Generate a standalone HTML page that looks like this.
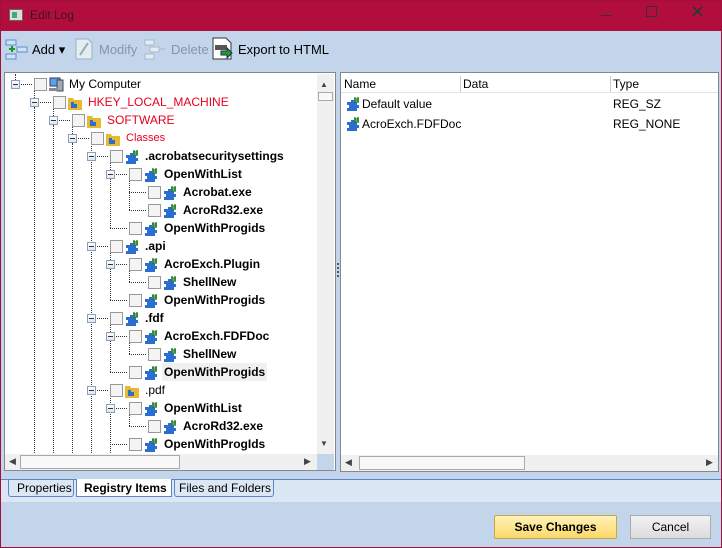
<!DOCTYPE html>
<html><head><meta charset="utf-8"><style>
*{box-sizing:border-box;margin:0;padding:0}
body{width:722px;height:548px;overflow:hidden;background:#c2d5eb;font-family:"Liberation Sans",sans-serif;font-size:12px;position:relative}
.a{position:absolute}
.title{left:0;top:0;width:722px;height:31px;background:#b10e3e}
.tb{font-size:13px;color:#000}
.panel{background:#fff;border:1px solid #828790}
.row{position:absolute;height:18px;line-height:18px;white-space:nowrap}
.exp{position:absolute;width:9px;height:9px;border:1px solid #8aa0b8;background:linear-gradient(#fff,#dfe6ee);top:5px}
.exp:after{content:"";position:absolute;left:1px;top:3px;width:5px;height:1px;background:#333}
.cb{position:absolute;width:13px;height:13px;border:1px solid #999;background:#f4f4f4;top:3px}
.ic{position:absolute;top:2px;width:16px;height:15px}
.t{position:absolute;top:0;font-size:12px}
.b{font-weight:bold}
.red{color:#e8001c}
.v{position:absolute;width:0;border-left:1px dotted #333}
.h{position:absolute;height:0;border-top:1px dotted #333}
.btn{position:absolute;text-align:center;line-height:22px;font-size:12px}
</style></head><body>
<svg width="0" height="0" style="position:absolute">
<defs>
<symbol id="pz" viewBox="0 0 16 15"><path d="M2 6h4V4h3v2h3v3h2v3h-2v3H2v-3h2V9H2z" fill="#2a6fd0"/><path d="M10 1v6M13 1v6M9 3h5M9 5h5" stroke="#1a7a1a" stroke-width="1.3"/></symbol>
<symbol id="fd" viewBox="0 0 16 15"><path d="M1 3h5l1 2h8v10H1z" fill="#e8b830"/><path d="M4 7h3v2h3v4H4z" fill="#2a6fd0"/></symbol>
</defs></svg>

<div class="a title"></div>
<div class="a" style="left:0;top:0;width:722px;height:548px;border:1px solid #a01038;pointer-events:none;z-index:5"></div>
<div class="a" style="left:9px;top:9px;width:14px;height:12px;background:#ddd;border:1px solid #666"><div style="margin:2px;width:5px;height:6px;background:#4a7"></div></div>
<div class="a" style="left:30px;top:8px;font-size:12px;color:#3a1520">Edit Log</div>
<div class="a" style="left:601px;top:15px;width:11px;height:1px;background:#333"></div>
<div class="a" style="left:646px;top:6px;width:11px;height:11px;border:1px solid #333"></div>
<div class="a" style="left:690px;top:2px;font-size:18px;color:#333">✕</div>

<!-- toolbar -->
<svg class="a" style="left:5px;top:39px" width="24" height="22"><rect x="1" y="1" width="10" height="5" fill="#cfe3f8" stroke="#5b8ec8"/><rect x="1" y="15" width="10" height="5" fill="#cfe3f8" stroke="#5b8ec8"/><rect x="12" y="8" width="10" height="5" fill="#cfe3f8" stroke="#5b8ec8"/><path d="M4 10h6M7 7v6" stroke="#1a9a1a" stroke-width="2"/></svg>
<div class="a tb" style="left:32px;top:42px">Add ▾</div>
<svg class="a" style="left:74px;top:37px" width="20" height="24"><path d="M2 2h12l4 4v16H2z" fill="#e4ecf4" stroke="#9fb0c4"/><path d="M6 18l8-12" stroke="#9aa" stroke-width="2"/></svg>
<div class="a tb" style="left:99px;top:42px;color:#8a95a3">Modify</div>
<svg class="a" style="left:144px;top:39px" width="24" height="22"><rect x="1" y="1" width="9" height="5" fill="#e4ecf4" stroke="#a8b8cc"/><rect x="1" y="15" width="9" height="5" fill="#e4ecf4" stroke="#a8b8cc"/><rect x="6" y="8" width="9" height="5" fill="#e4ecf4" stroke="#a8b8cc"/><path d="M16 10h5" stroke="#a8b8cc"/></svg>
<div class="a tb" style="left:171px;top:42px;color:#8a95a3">Delete</div>
<svg class="a" style="left:212px;top:37px" width="22" height="24"><path d="M1 1h13l5 5v16H1z" fill="#fff" stroke="#333"/><rect x="3" y="8" width="12" height="5" fill="#555"/><path d="M9 14h6v-3l5 5-5 5v-3H9z" fill="#2a9a2a" stroke="#135"/></svg>
<div class="a tb" style="left:238px;top:42px">Export to HTML</div>

<!-- tree panel -->
<div class="a panel" style="left:4px;top:72px;width:332px;height:399px"></div>
<div class="a" style="left:317px;top:74px;width:17px;height:380px;background:#f0f0f0"></div>
<div class="a" style="left:320px;top:80px;font-size:8px;color:#444">▲</div>
<div class="a" style="left:318px;top:92px;width:15px;height:9px;border:1px solid #aaa;background:#f8f8f8"></div>
<div class="a" style="left:320px;top:439px;font-size:8px;color:#444">▼</div>
<div class="a" style="left:5px;top:454px;width:312px;height:16px;background:#f0f0f0"></div>
<div class="a" style="left:20px;top:455px;width:160px;height:14px;border:1px solid #aaa;background:#f8f8f8"></div>
<div class="a" style="left:9px;top:456px;font-size:9px;color:#444">◀</div>
<div class="a" style="left:304px;top:456px;font-size:9px;color:#444">▶</div>
<div class="a" style="left:317px;top:454px;width:17px;height:16px;background:#c2d5eb"></div>

<!-- dotted lines -->
<div class="v" style="left:15px;top:74px;height:6px"></div>
<div class="v" style="left:34px;top:89px;height:9px"></div>
<div class="v" style="left:53px;top:107px;height:9px"></div>
<div class="v" style="left:72px;top:125px;height:9px"></div>
<div class="v" style="left:91px;top:143px;height:310px"></div>
<div class="v" style="left:110px;top:161px;height:67px"></div>
<div class="v" style="left:110px;top:251px;height:49px"></div>
<div class="v" style="left:110px;top:323px;height:49px"></div>
<div class="v" style="left:110px;top:395px;height:58px"></div>
<div class="v" style="left:129px;top:179px;height:31px"></div>
<div class="v" style="left:129px;top:269px;height:13px"></div>
<div class="v" style="left:129px;top:341px;height:13px"></div>
<div class="v" style="left:129px;top:413px;height:13px"></div>
<div class="v" style="left:72px;top:143px;height:310px"></div>
<div class="v" style="left:53px;top:125px;height:328px"></div>
<div class="v" style="left:34px;top:107px;height:346px"></div>

<div class="row" style="top:75px;left:0;width:316px">
<div class="exp" style="left:11px"></div><div class="h" style="left:21px;top:9px;width:11px"></div>
<div class="cb" style="left:34px"></div>
<svg class="ic" style="left:48px" viewBox="0 0 16 15"><rect x="2" y="1" width="10" height="8" fill="#5ba3e8" stroke="#336"/><rect x="9" y="3" width="6" height="11" fill="#9ab" stroke="#445"/><rect x="1" y="11" width="9" height="3" fill="#889"/></svg>
<span class="t" style="left:69px">My Computer</span></div>

<div class="row" style="top:93px;left:0;width:316px">
<div class="exp" style="left:30px"></div><div class="h" style="left:40px;top:9px;width:11px"></div>
<div class="cb" style="left:53px"></div><svg class="ic" style="left:67px"><use href="#fd"/></svg>
<span class="t red" style="left:88px">HKEY_LOCAL_MACHINE</span></div>

<div class="row" style="top:111px;left:0;width:316px">
<div class="exp" style="left:49px"></div><div class="h" style="left:59px;top:9px;width:11px"></div>
<div class="cb" style="left:72px"></div><svg class="ic" style="left:86px"><use href="#fd"/></svg>
<span class="t red" style="left:107px">SOFTWARE</span></div>

<div class="row" style="top:129px;left:0;width:316px">
<div class="exp" style="left:68px"></div><div class="h" style="left:78px;top:9px;width:11px"></div>
<div class="cb" style="left:91px"></div><svg class="ic" style="left:105px"><use href="#fd"/></svg>
<span class="t red" style="left:126px;font-size:11px">Classes</span></div>

<div class="row" style="top:147px;left:0;width:316px">
<div class="exp" style="left:87px"></div><div class="h" style="left:97px;top:9px;width:11px"></div>
<div class="cb" style="left:110px"></div><svg class="ic" style="left:124px"><use href="#pz"/></svg>
<span class="t b" style="left:145px">.acrobatsecuritysettings</span></div>

<div class="row" style="top:165px;left:0;width:316px">
<div class="exp" style="left:106px"></div><div class="h" style="left:116px;top:9px;width:11px"></div>
<div class="cb" style="left:129px"></div><svg class="ic" style="left:143px"><use href="#pz"/></svg>
<span class="t b" style="left:164px">OpenWithList</span></div>

<div class="row" style="top:183px;left:0;width:316px">
<div class="h" style="left:129px;top:9px;width:17px"></div>
<div class="cb" style="left:148px"></div><svg class="ic" style="left:162px"><use href="#pz"/></svg>
<span class="t b" style="left:183px">Acrobat.exe</span></div>

<div class="row" style="top:201px;left:0;width:316px">
<div class="h" style="left:129px;top:9px;width:17px"></div>
<div class="cb" style="left:148px"></div><svg class="ic" style="left:162px"><use href="#pz"/></svg>
<span class="t b" style="left:183px">AcroRd32.exe</span></div>

<div class="row" style="top:219px;left:0;width:316px">
<div class="h" style="left:110px;top:9px;width:17px"></div>
<div class="cb" style="left:129px"></div><svg class="ic" style="left:143px"><use href="#pz"/></svg>
<span class="t b" style="left:164px">OpenWithProgids</span></div>

<div class="row" style="top:237px;left:0;width:316px">
<div class="exp" style="left:87px"></div><div class="h" style="left:97px;top:9px;width:11px"></div>
<div class="cb" style="left:110px"></div><svg class="ic" style="left:124px"><use href="#pz"/></svg>
<span class="t b" style="left:145px">.api</span></div>

<div class="row" style="top:255px;left:0;width:316px">
<div class="exp" style="left:106px"></div><div class="h" style="left:116px;top:9px;width:11px"></div>
<div class="cb" style="left:129px"></div><svg class="ic" style="left:143px"><use href="#pz"/></svg>
<span class="t b" style="left:164px">AcroExch.Plugin</span></div>

<div class="row" style="top:273px;left:0;width:316px">
<div class="h" style="left:129px;top:9px;width:17px"></div>
<div class="cb" style="left:148px"></div><svg class="ic" style="left:162px"><use href="#pz"/></svg>
<span class="t b" style="left:183px">ShellNew</span></div>

<div class="row" style="top:291px;left:0;width:316px">
<div class="h" style="left:110px;top:9px;width:17px"></div>
<div class="cb" style="left:129px"></div><svg class="ic" style="left:143px"><use href="#pz"/></svg>
<span class="t b" style="left:164px">OpenWithProgids</span></div>

<div class="row" style="top:309px;left:0;width:316px">
<div class="exp" style="left:87px"></div><div class="h" style="left:97px;top:9px;width:11px"></div>
<div class="cb" style="left:110px"></div><svg class="ic" style="left:124px"><use href="#pz"/></svg>
<span class="t b" style="left:145px">.fdf</span></div>

<div class="row" style="top:327px;left:0;width:316px">
<div class="exp" style="left:106px"></div><div class="h" style="left:116px;top:9px;width:11px"></div>
<div class="cb" style="left:129px"></div><svg class="ic" style="left:143px"><use href="#pz"/></svg>
<span class="t b" style="left:164px">AcroExch.FDFDoc</span></div>

<div class="row" style="top:345px;left:0;width:316px">
<div class="h" style="left:129px;top:9px;width:17px"></div>
<div class="cb" style="left:148px"></div><svg class="ic" style="left:162px"><use href="#pz"/></svg>
<span class="t b" style="left:183px">ShellNew</span></div>

<div class="row" style="top:363px;left:0;width:316px">
<div class="h" style="left:110px;top:9px;width:17px"></div>
<div class="cb" style="left:129px"></div><svg class="ic" style="left:143px"><use href="#pz"/></svg>
<span class="t b" style="left:162px;background:#f0f0f0;padding:0 2px">OpenWithProgids</span></div>

<div class="row" style="top:381px;left:0;width:316px">
<div class="exp" style="left:87px"></div><div class="h" style="left:97px;top:9px;width:11px"></div>
<div class="cb" style="left:110px"></div><svg class="ic" style="left:124px"><use href="#fd"/></svg>
<span class="t" style="left:145px">.pdf</span></div>

<div class="row" style="top:399px;left:0;width:316px">
<div class="exp" style="left:106px"></div><div class="h" style="left:116px;top:9px;width:11px"></div>
<div class="cb" style="left:129px"></div><svg class="ic" style="left:143px"><use href="#pz"/></svg>
<span class="t b" style="left:164px">OpenWithList</span></div>

<div class="row" style="top:417px;left:0;width:316px">
<div class="h" style="left:129px;top:9px;width:17px"></div>
<div class="cb" style="left:148px"></div><svg class="ic" style="left:162px"><use href="#pz"/></svg>
<span class="t b" style="left:183px">AcroRd32.exe</span></div>

<div class="row" style="top:435px;left:0;width:316px">
<div class="h" style="left:110px;top:9px;width:17px"></div>
<div class="cb" style="left:129px"></div><svg class="ic" style="left:143px"><use href="#pz"/></svg>
<span class="t b" style="left:164px">OpenWithProgIds</span></div>

<div class="a" style="left:337px;top:263px;width:2px;height:14px;border-left:2px dotted #556"></div>

<!-- right panel -->
<div class="a panel" style="left:340px;top:72px;width:379px;height:400px"></div>
<div class="a" style="left:341px;top:75px;width:377px;height:18px;background:#fff;border-bottom:1px solid #e4e4e4"></div>
<div class="a" style="left:344px;top:77px">Name</div>
<div class="a" style="left:460px;top:76px;width:1px;height:16px;background:#ccc"></div>
<div class="a" style="left:463px;top:77px">Data</div>
<div class="a" style="left:610px;top:76px;width:1px;height:16px;background:#ccc"></div>
<div class="a" style="left:613px;top:77px">Type</div>
<svg class="a" style="left:345px;top:96px" width="16" height="15"><use href="#pz"/></svg>
<div class="a" style="left:362px;top:97px">Default value</div>
<div class="a" style="left:613px;top:97px">REG_SZ</div>
<svg class="a" style="left:345px;top:116px" width="16" height="15"><use href="#pz"/></svg>
<div class="a" style="left:362px;top:117px">AcroExch.FDFDoc</div>
<div class="a" style="left:613px;top:117px">REG_NONE</div>
<div class="a" style="left:341px;top:455px;width:377px;height:16px;background:#f0f0f0"></div>
<div class="a" style="left:359px;top:456px;width:166px;height:14px;border:1px solid #aaa;background:#f8f8f8"></div>
<div class="a" style="left:345px;top:457px;font-size:9px;color:#444">◀</div>
<div class="a" style="left:706px;top:457px;font-size:9px;color:#444">▶</div>

<!-- tabs -->
<div class="a" style="left:0;top:479px;width:722px;height:23px;background:#dce7f5;border-top:1px solid #5b86c5"></div>
<div class="a" style="left:8px;top:479px;width:66px;height:18px;border:1px solid #5b86c5;border-top:none;border-radius:0 0 3px 3px"></div>
<div class="a" style="left:17px;top:481px;font-size:12px">Properties</div>
<div class="a" style="left:76px;top:479px;width:96px;height:18px;background:#fff;border:1px solid #5b86c5;border-top:none"></div>
<div class="a" style="left:84px;top:481px;font-size:12px;font-weight:bold">Registry Items</div>
<div class="a" style="left:174px;top:479px;width:100px;height:18px;border:1px solid #5b86c5;border-top:none;border-radius:0 0 3px 3px"></div>
<div class="a" style="left:179px;top:481px;font-size:12px">Files and Folders</div>

<!-- buttons -->
<div class="btn" style="left:494px;top:515px;width:123px;height:24px;border:1px solid #c2a84a;background:linear-gradient(#fff3b8,#fcd86a);font-weight:bold;border-radius:2px">Save Changes</div>
<div class="btn" style="left:630px;top:515px;width:81px;height:24px;border:1px solid #acacac;background:linear-gradient(#f2f2f2,#dcdcdc)">Cancel</div>
</body></html>
